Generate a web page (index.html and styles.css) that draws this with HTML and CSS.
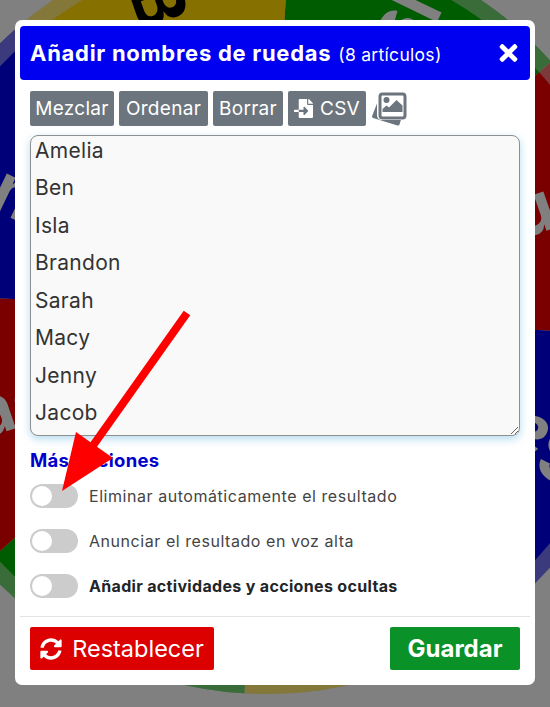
FILE: index.html
```html
<!DOCTYPE html>
<html lang="es">
<head>
<meta charset="utf-8">
<title>Añadir nombres de ruedas</title>
<link rel="stylesheet" href="styles.css">
</head>
<body>
<svg class="wheel" viewBox="0 0 550 707" width="550" height="707" aria-hidden="true">
  <g transform="translate(267 314) rotate(3.4)">
    <path class="seg green" d="M0 0V-380A380 380 0 0 1 268.7 -268.7Z"/>
    <path class="seg red" transform="rotate(45)" d="M0 0V-380A380 380 0 0 1 268.7 -268.7Z"/>
    <path class="seg blue" transform="rotate(90)" d="M0 0V-380A380 380 0 0 1 268.7 -268.7Z"/>
    <path class="seg yellow" transform="rotate(135)" d="M0 0V-380A380 380 0 0 1 268.7 -268.7Z"/>
    <path class="seg green" transform="rotate(180)" d="M0 0V-380A380 380 0 0 1 268.7 -268.7Z"/>
    <path class="seg red" transform="rotate(225)" d="M0 0V-380A380 380 0 0 1 268.7 -268.7Z"/>
    <path class="seg blue" transform="rotate(270)" d="M0 0V-380A380 380 0 0 1 268.7 -268.7Z"/>
    <path class="seg yellow" transform="rotate(315)" d="M0 0V-380A380 380 0 0 1 268.7 -268.7Z"/>
    <circle class="ring" r="372"/>
    <text class="wname dark" transform="rotate(-22.5) translate(0 -352) rotate(90)">Ben</text>
    <text class="wname" transform="rotate(22.5) translate(0 -352) rotate(90)">Isla</text>
    <text class="wname" transform="rotate(67.5) translate(0 -352) rotate(90)">Brandon</text>
    <text class="wname" transform="rotate(112.5) translate(0 -352) rotate(90)">Sarah</text>
    <text class="wname" transform="rotate(247.5) translate(0 -352) rotate(90)">Jacob</text>
    <text class="wname" transform="rotate(292.5) translate(0 -352) rotate(90)">Amelia</text>
  </g>
</svg>

<main class="modal">
  <header class="modal-head">
    <h1 class="modal-title">Añadir nombres de ruedas <small class="modal-count">(8 artículos)</small></h1>
    <svg class="close-icon" viewBox="0 0 352 512" aria-label="Cerrar"><path d="M242.72 256l100.07-100.07c12.28-12.28 12.28-32.19 0-44.48l-22.24-22.24c-12.28-12.28-32.19-12.28-44.48 0L176 189.28 75.93 89.21c-12.28-12.28-32.19-12.28-44.48 0L9.21 111.45c-12.28 12.28-12.28 32.19 0 44.48L109.28 256 9.21 356.07c-12.28 12.28-12.28 32.19 0 44.48l22.24 22.24c12.28 12.28 32.2 12.28 44.48 0L176 322.72l100.07 100.07c12.28 12.28 32.2 12.28 44.48 0l22.24-22.24c12.28-12.28 12.28-32.19 0-44.48L242.72 256z"/></svg>
  </header>

  <div class="toolbar">
    <button class="tool tool-mezclar">Mezclar</button>
    <button class="tool tool-ordenar">Ordenar</button>
    <button class="tool tool-borrar">Borrar</button>
    <button class="tool tool-csv">
      <svg class="file-icon" viewBox="0 0 512 512"><path d="M16 288c-8.84 0-16 7.16-16 16v32c0 8.84 7.16 16 16 16h112v-64zm489-183L407.1 7c-4.5-4.5-10.6-7-17-7H384v128h128v-6.1c0-6.3-2.5-12.4-7-16.9zm-153 31V0H152c-13.3 0-24 10.7-24 24v264h128v-65.2c0-14.3 17.3-21.4 27.4-11.3L379 308c6.6 6.7 6.6 17.4 0 24l-95.7 96.4c-10.1 10.1-27.4 3-27.4-11.3V352H128v136c0 13.3 10.7 24 24 24h336c13.3 0 24-10.7 24-24V160H376c-13.2 0-24-10.8-24-24z"/></svg>
      CSV
    </button>
    <svg class="images-icon" viewBox="0 0 36 35" aria-label="Imágenes">
      <path class="images-back" d="M6 12.5 1.2 24.8c-.4 1-.1 1.7.9 2.1l24.4 7.6c1 .3 1.7 0 2-1l1.4-4.4H11c-3 0-5-2-5-5Z"/>
      <rect class="images-frame" x="9" y="3" width="25" height="24" rx="2.5"/>
      <circle class="images-fill" cx="15.5" cy="9" r="3"/>
      <path class="images-fill" d="M11.5 21v-3l4-3.5 2.5 2 7.5-7.5 6 5.5V21Z"/>
    </svg>
  </div>

  <div class="names">
    <div class="name first">Amelia</div>
    <div class="name">Ben</div>
    <div class="name">Isla</div>
    <div class="name">Brandon</div>
    <div class="name">Sarah</div>
    <div class="name">Macy</div>
    <div class="name">Jenny</div>
    <div class="name">Jacob</div>
  </div>

  <h2 class="more">Más opciones</h2>

  <ul class="options">
    <li class="option"><span class="toggle"></span><span class="option-label">Eliminar automáticamente el resultado</span></li>
    <li class="option"><span class="toggle"></span><span class="option-label">Anunciar el resultado en voz alta</span></li>
    <li class="option"><span class="toggle"></span><span class="option-label strong">Añadir actividades y acciones ocultas</span></li>
  </ul>

  <footer class="modal-foot">
    <button class="btn btn-reset">
      <svg class="sync-icon" viewBox="0 0 512 512"><path d="M370.72 133.28C339.458 104.008 298.888 87.962 255.848 88c-77.458.068-144.328 53.178-162.791 126.85-1.344 5.363-6.122 9.15-11.651 9.15H24.103c-7.498 0-13.194-6.807-11.807-14.176C33.933 94.924 134.813 8 256 8c66.448 0 126.791 26.136 171.315 68.685L463.03 40.97C478.149 25.851 504 36.559 504 57.941V192c0 13.255-10.745 24-24 24H345.941c-21.382 0-32.09-25.851-16.971-40.971l41.75-41.749zM32 296h134.059c21.382 0 32.09 25.851 16.971 40.971l-41.75 41.75c31.262 29.273 71.835 45.319 114.876 45.28 77.418-.07 144.315-53.144 162.787-126.849 1.344-5.363 6.122-9.15 11.651-9.15h57.304c7.498 0 13.194 6.807 11.807 14.176C478.067 417.076 377.187 504 256 504c-66.448 0-126.791-26.136-171.315-68.685L48.97 471.03C33.851 486.149 8 475.441 8 454.059V320c0-13.255 10.745-24 24-24z"/></svg>
      Restablecer
    </button>
    <button class="btn btn-save">Guardar</button>
  </footer>
</main>

<svg class="arrow" viewBox="0 0 550 707" width="550" height="707" aria-hidden="true">
  <path class="arrow-shaft" d="M187 313 92 447"/>
  <path class="arrow-head" d="M62 491 76 432 113 458Z"/>
</svg>
</body>
</html>
```
FILE: styles.css
```css
* { box-sizing: border-box; }

html, body {
  margin: 0;
  height: 707px;
  overflow: hidden;
}

body {
  background: #808080;
  padding: 20px 15px 0;
  font-family: Inter, "Open Sans", "Liberation Sans", sans-serif;
  color: #333;
  position: relative;
}

/* wheel behind the dialog */
.wheel { position: absolute; left: 0; top: 0; }
.seg.green { fill: #005c00; }
.seg.red { fill: #7a0000; }
.seg.blue { fill: #000078; }
.seg.yellow { fill: #857000; }
.ring { fill: none; stroke: rgba(128,128,128,.45); stroke-width: 16; }
.wname {
  font-family: Inter, sans-serif;
  font-weight: 700;
  font-size: 70px;
  fill: #808080;
  dominant-baseline: central;
}
.wname.dark { fill: #000; }

/* dialog */
.modal {
  position: relative;
  width: 520px;
  height: 665px;
  background: #fff;
  border-radius: 7px;
  padding: 6px 5px 0;
  display: flex;
  flex-direction: column;
}

.modal-head {
  height: 54px;
  background: #0000f0;
  border-radius: 4px;
  color: #fff;
  padding: 0 12px 0 10px;
  display: flex;
  align-items: center;
  justify-content: space-between;
}
.modal-title {
  margin: 0;
  font-size: 22px;
  font-weight: 700;
  letter-spacing: .72px;
  white-space: nowrap;
}
.modal-count {
  font-size: 17.5px;
  font-weight: 400;
  letter-spacing: .3px;
  margin-left: 1px;
}
.close-icon { width: 19px; height: 26px; fill: #fff; display: block; }

.toolbar {
  margin: 11px 10px 0;
  display: flex;
  gap: 5px;
  height: 35px;
}
.tool {
  border: 0;
  border-radius: 2px;
  background: #6c757d;
  color: #fff;
  font: 400 19px Inter, sans-serif;
  letter-spacing: .3px;
  height: 35px;
  padding: 0;
  display: flex;
  align-items: center;
  justify-content: center;
}
.tool-mezclar { width: 84px; }
.tool-ordenar { width: 89px; }
.tool-borrar { width: 70px; }
.tool-csv { width: 78px; gap: 7px; }
.file-icon { width: 19px; height: 19px; fill: #fff; }
.images-icon { width: 36px; height: 35px; }
.images-back, .images-fill { fill: #6c757d; }
.images-frame { fill: #fff; stroke: #6c757d; stroke-width: 3; }

/* names list */
.names {
  margin: 9px 10px 0;
  height: 301px;
  border: 1px solid #8f8f8f;
  border-radius: 8px;
  background: #f9f9f9;
  padding: 0 4px;
  overflow: hidden;
  resize: vertical;
  box-shadow: 0 3px 9px rgba(120,190,225,.55);
  font-size: 21px;
  letter-spacing: .3px;
  color: #333;
}
.name { height: 37.43px; line-height: 37.43px; }
.name.first { margin-top: -4px; }

.more {
  margin: 14px 10px 0;
  font-size: 18.5px;
  line-height: 21px;
  font-weight: 700;
  letter-spacing: .3px;
  color: #0000cc;
}

.options {
  list-style: none;
  margin: 13px 10px 0;
  padding: 0;
  display: flex;
  flex-direction: column;
  gap: 21px;
}
.option { display: flex; align-items: center; gap: 11px; height: 24px; }
.toggle {
  flex: none;
  width: 48px;
  height: 24px;
  border-radius: 12px;
  background: #ccc;
  padding: 2px;
}
.toggle::before {
  content: "";
  display: block;
  width: 20px;
  height: 20px;
  border-radius: 50%;
  background: #fff;
}
.option-label { font-size: 16px; color: #444; letter-spacing: .55px; }
.option-label.strong { font-weight: 700; color: #212529; letter-spacing: .33px; }

.modal-foot {
  margin-top: 18px;
  border-top: 1px solid #e3e3e3;
  padding: 10px 10px 0;
  display: flex;
  justify-content: space-between;
}
.btn {
  border: 0;
  border-radius: 2px;
  height: 43px;
  color: #fff;
  font: 400 23.5px Inter, sans-serif;
  padding: 0;
  display: flex;
  align-items: center;
  justify-content: center;
}
.btn-reset { width: 184px; background: #dc0000; gap: 10px; }
.btn-save { width: 130px; background: #0a9128; font-weight: 700; font-size: 24px; }
.sync-icon { width: 22px; height: 22px; fill: #fff; }

/* annotation over the dialog */
.arrow { position: absolute; left: 0; top: 0; pointer-events: none; }
.arrow-shaft { stroke: #f00; stroke-width: 8; fill: none; }
.arrow-head { fill: #f00; }
```
